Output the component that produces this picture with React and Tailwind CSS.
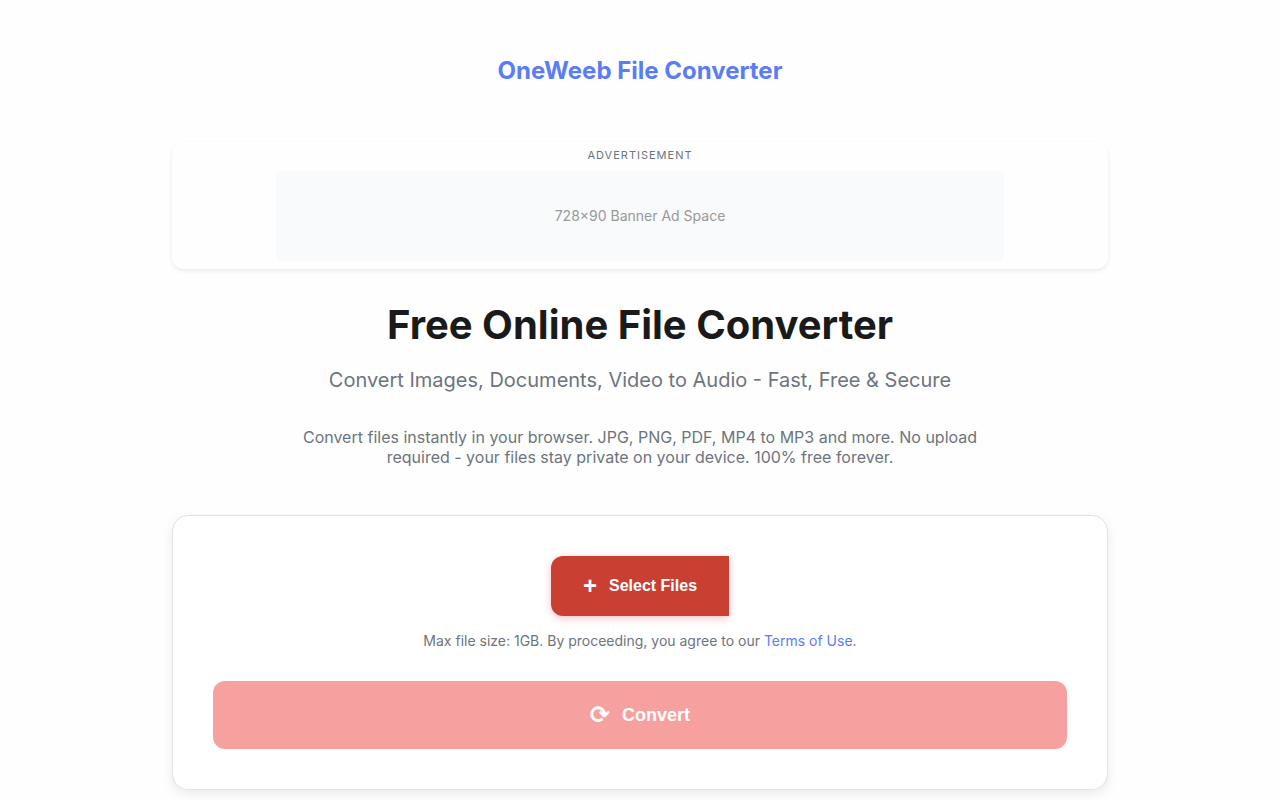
import { useRef, useState } from "react";

const App = () => {
  const [files, setFiles] = useState([]);
  const fileInput = useRef(null);

  const handleFiles = (event) => {
    setFiles(Array.from(event.target.files));
  };

  return (
    <div className="min-h-screen bg-[#fefefe] font-['Inter',sans-serif] text-[#1a1a1a]">
      <div className="mx-auto max-w-[1000px] px-8 pb-12">
        <header className="flex justify-center py-14">
          <a href="#" className="text-2xl leading-[30px] font-bold text-[#5b7cf7]">
            OneWeeb File Converter
          </a>
        </header>

        <aside className="rounded-xl px-4 pt-1.5 pb-2 text-center shadow-[0_2px_4px_rgba(0,0,0,0.08)]">
          <p className="mb-2 text-[11px] leading-[15px] tracking-[1px] text-[#6c757d] uppercase">Advertisement</p>
          <div className="mx-auto flex h-[90px] max-w-[728px] items-center justify-center rounded-lg bg-[#f8fafb] text-sm text-[#999999]">
            728×90 Banner Ad Space
          </div>
        </aside>

        <main>
          <section className="mt-8 text-center">
            <h1 className="text-[40px] leading-12 font-bold">Free Online File Converter</h1>
            <p className="mt-4 text-xl leading-[30px] text-[#6c757d]">
              Convert Images, Documents, Video to Audio - Fast, Free &amp; Secure
            </p>
            <p className="mx-auto mt-8 max-w-[700px] text-base leading-5 text-[#6c757d]">
              Convert files instantly in your browser. JPG, PNG, PDF, MP4 to MP3 and more. No upload required - your
              files stay private on your device. 100% free forever.
            </p>
          </section>

          <section className="mt-12 rounded-2xl border border-[#e0e4e8] bg-white p-10 shadow-[0_4px_12px_rgba(0,0,0,0.08)]">
            <div className="text-center">
              <input ref={fileInput} type="file" multiple aria-label="Files" className="hidden" onChange={handleFiles} />
              <button
                type="button"
                onClick={() => fileInput.current.click()}
                className="mx-auto flex h-15 items-center gap-3 rounded-l-xl bg-[#c94032] px-8 font-['Liberation_Sans',sans-serif] text-base font-bold text-white shadow-[0_2px_8px_rgba(220,53,69,0.3)]"
              >
                <span className="text-2xl">+</span>
                Select Files
              </button>
              <p className="mt-4 text-sm leading-[17px] text-[#6c757d]">
                Max file size: 1GB. By proceeding, you agree to our{" "}
                <a href="#" className="text-[#5b7cf7]">Terms of Use</a>.
              </p>
            </div>
            <button
              type="button"
              disabled={files.length === 0}
              className="mt-8 flex h-17 w-full items-center justify-center gap-3 rounded-xl bg-[#f03e3a] font-['Liberation_Sans','DejaVu_Sans',sans-serif] text-lg font-bold text-white disabled:bg-[#f6a19f]"
            >
              <span className="text-2xl">⟳</span>
              Convert
            </button>
          </section>
        </main>
      </div>
    </div>
  );
};

export default App;
